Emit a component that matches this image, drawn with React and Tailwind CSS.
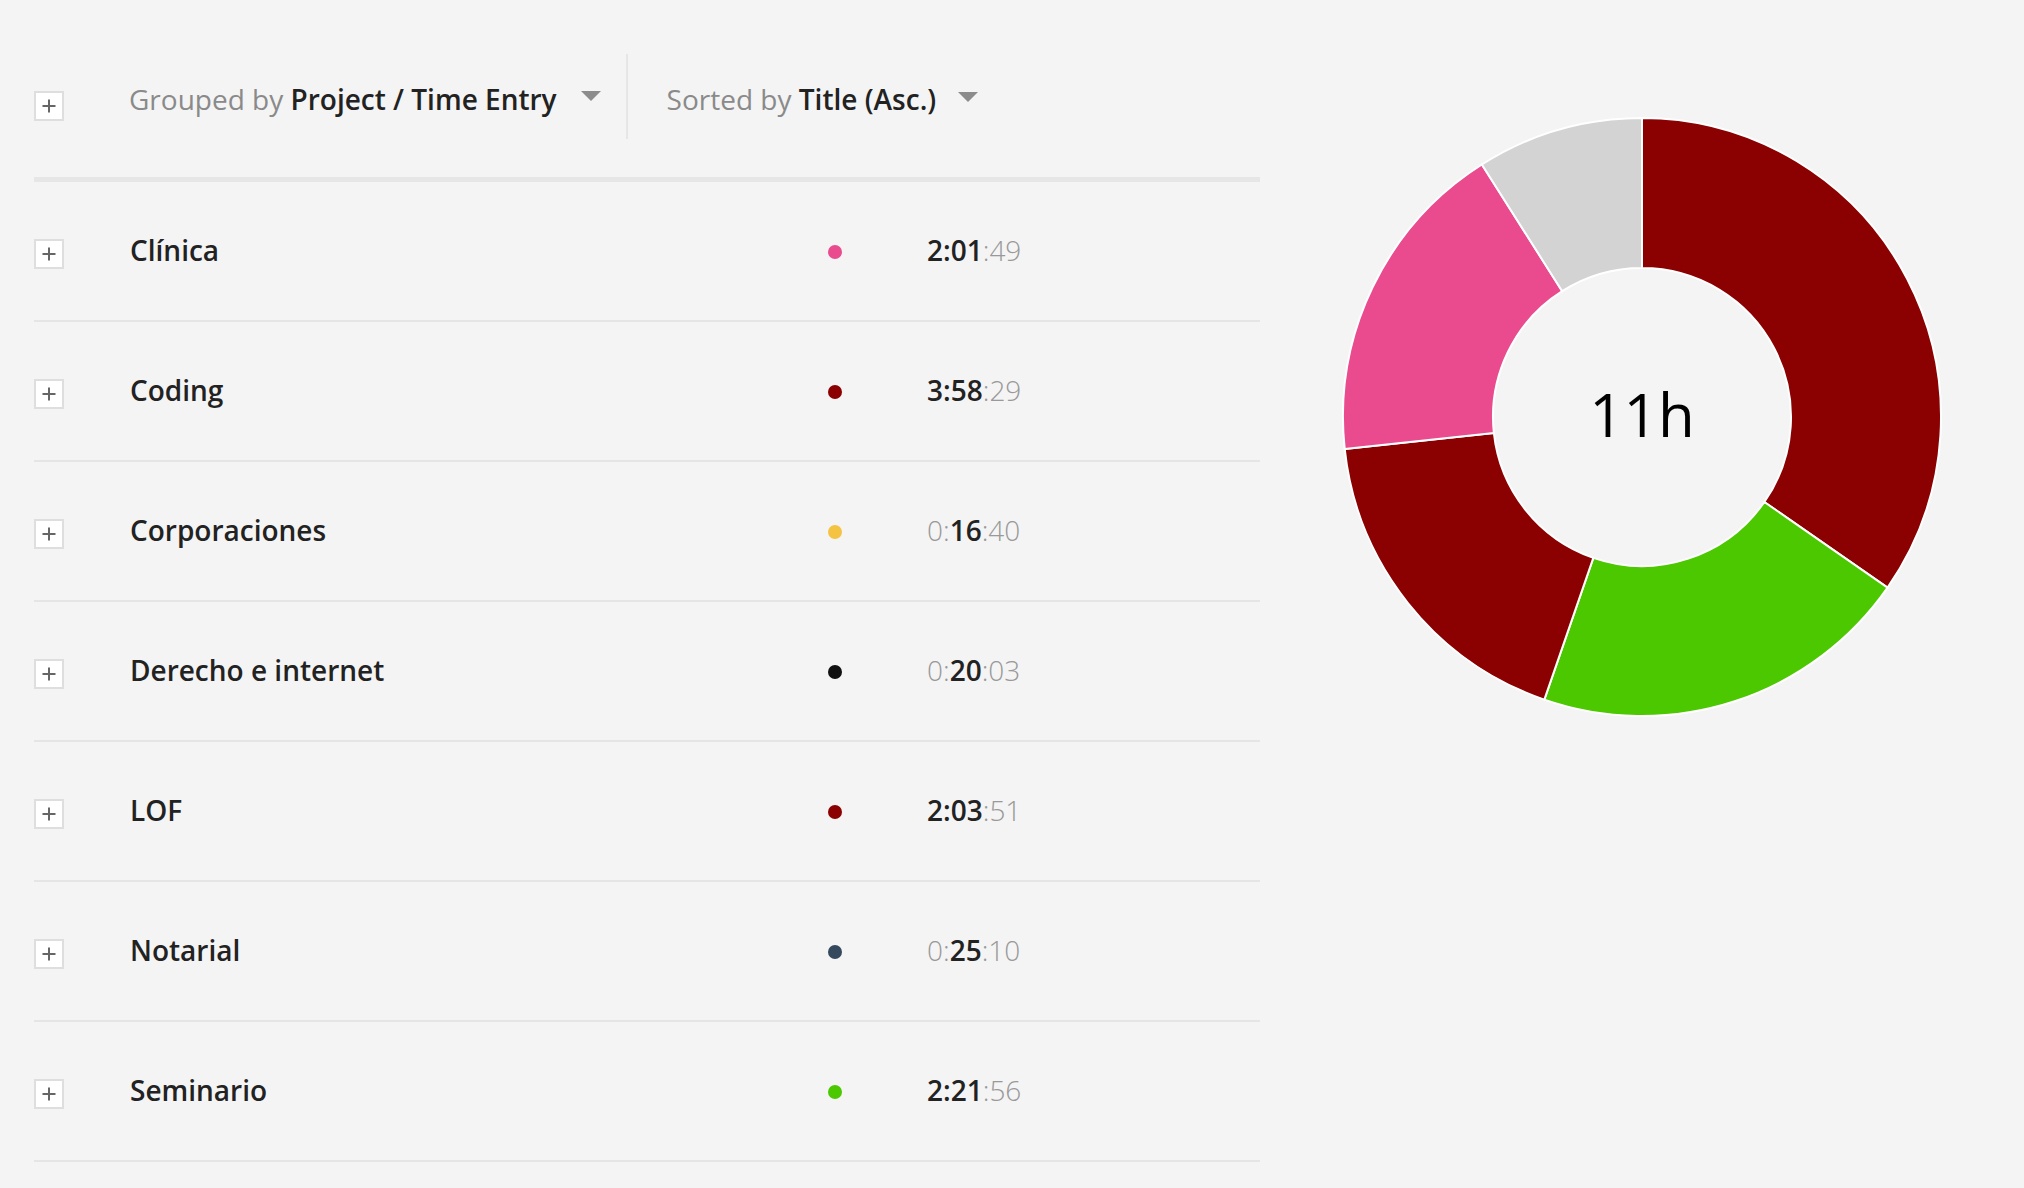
import React from "react";

const rows = [
  { name: "Clínica", color: "#ea4a8e", h: 2, m: 1, s: 49 },
  { name: "Coding", color: "#8b0000", h: 3, m: 58, s: 29 },
  { name: "Corporaciones", color: "#f5c342", h: 0, m: 16, s: 40 },
  { name: "Derecho e internet", color: "#111111", h: 0, m: 20, s: 3 },
  { name: "LOF", color: "#8b0000", h: 2, m: 3, s: 51 },
  { name: "Notarial", color: "#34495e", h: 0, m: 25, s: 10 },
  { name: "Seminario", color: "#4cc800", h: 2, m: 21, s: 56 },
];

const pad = (n) => String(n).padStart(2, "0");

function PlusBox() {
  return (
    <div className="w-[30px] h-[30px] shrink-0 border-2 border-[#dedede] bg-white flex items-center justify-center">
      <svg width="14" height="14" viewBox="0 0 14 14">
        <path d="M7 0.5V13.5M0.5 7H13.5" stroke="#666" strokeWidth="2" />
      </svg>
    </div>
  );
}

function Caret() {
  return (
    <svg width="20" height="10" viewBox="0 0 20 10" className="shrink-0">
      <path d="M0 0H20L10 10Z" fill="#8c8c8c" />
    </svg>
  );
}

function Time({ h, m, s }) {
  if (h > 0) {
    return (
      <span>
        <span className="font-semibold text-[#222]">
          {h}:{pad(m)}
        </span>
        <span className="font-light text-[#999]">:{pad(s)}</span>
      </span>
    );
  }
  return (
    <span>
      <span className="font-light text-[#999]">0:</span>
      <span className="font-semibold text-[#222]">{pad(m)}</span>
      <span className="font-light text-[#999]">:{pad(s)}</span>
    </span>
  );
}

const segments = [
  { color: "#8b0000", v: 14309 },
  { color: "#4cc800", v: 8516 },
  { color: "#8b0000", v: 7431 },
  { color: "#ea4a8e", v: 7309 },
  { color: "#d3d3d3", v: 3713 },
];

function Donut() {
  const cx = 302,
    cy = 302,
    R = 299,
    r = 149;
  const total = segments.reduce((a, b) => a + b.v, 0);
  const pt = (deg, rad) => {
    const a = (deg * Math.PI) / 180;
    return [cx + rad * Math.sin(a), cy - rad * Math.cos(a)];
  };
  let acc = 0;
  const paths = segments.map((seg, i) => {
    const a0 = (acc / total) * 360;
    acc += seg.v;
    const a1 = (acc / total) * 360;
    const large = a1 - a0 > 180 ? 1 : 0;
    const [x0, y0] = pt(a0, R);
    const [x1, y1] = pt(a1, R);
    const [x2, y2] = pt(a1, r);
    const [x3, y3] = pt(a0, r);
    const d = `M${x0} ${y0}A${R} ${R} 0 ${large} 1 ${x1} ${y1}L${x2} ${y2}A${r} ${r} 0 ${large} 0 ${x3} ${y3}Z`;
    return <path key={i} d={d} fill={seg.color} stroke="#ffffff" strokeWidth="2" strokeLinejoin="round" />;
  });
  return (
    <svg width="604" height="604" viewBox="0 0 604 604">
      {paths}
      <text
        x="302"
        y="322"
        textAnchor="middle"
        fontFamily="'Open Sans', sans-serif"
        fontSize="60"
        fill="#000"
      >
        11h
      </text>
    </svg>
  );
}

export default function App() {
  return (
    <div className="w-[2024px] h-[1188px] bg-[#f4f4f4] font-['Open_Sans',sans-serif] flex overflow-hidden">
      <div className="ml-[34px] w-[1226px] flex flex-col">
        <div className="h-[177px] flex items-start">
          <div className="mt-[91px]">
            <PlusBox />
          </div>
          <div className="ml-[65px] mt-[79px] h-[40px] flex items-center text-[28px] leading-[40px] whitespace-nowrap">
            <span className="text-[#8a8a8a]">Grouped by&nbsp;</span>
            <span className="font-semibold text-[#222]">Project / Time Entry</span>
            <span className="ml-[24px] mt-[-6px] flex">
              <Caret />
            </span>
          </div>
          <div className="ml-[25px] mt-[54px] h-[85px] w-[2px] bg-[#e6e6e6]" />
          <div className="ml-[39px] mt-[79px] h-[40px] flex items-center text-[28px] leading-[40px] whitespace-nowrap">
            <span className="text-[#8a8a8a]">Sorted by&nbsp;</span>
            <span className="font-semibold text-[#222]">Title (Asc.)</span>
            <span className="ml-[22px] mt-[-4px] flex">
              <Caret />
            </span>
          </div>
        </div>
        <div className="h-[5px] bg-[#e6e6e6]" />
        {rows.map((row) => (
          <div
            key={row.name}
            className="h-[140px] flex items-center border-b-2 border-[#e5e5e5]"
          >
            <div className="mt-[5px]">
              <PlusBox />
            </div>
            <div className="ml-[66px] mt-[-2px] w-[698px] text-[28px] font-semibold text-[#222] leading-[40px]">
              {row.name}
            </div>
            <div className="w-[14px] h-[14px] mt-[2px] rounded-full" style={{ backgroundColor: row.color }} />
            <div className="ml-[85px] mt-[-2px] text-[28px] leading-[40px]">
              <Time h={row.h} m={row.m} s={row.s} />
            </div>
          </div>
        ))}
      </div>
      <div className="flex-1 flex justify-center items-start pt-[115px]">
        <Donut />
      </div>
    </div>
  );
}
